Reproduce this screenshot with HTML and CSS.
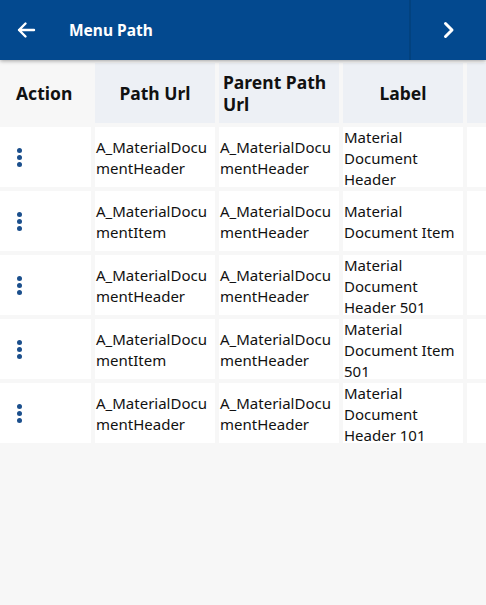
FILE: index.html
```html
<!DOCTYPE html>
<html lang="en">
<head>
<meta charset="utf-8">
<title>Menu Path</title>
<link rel="stylesheet" href="styles.css">
</head>
<body>
<header class="appbar">
  <button class="back" aria-label="Back">
    <svg width="20" height="20" viewBox="0 0 20 20"><path d="M18 10H3M9.5 3.5L3 10l6.5 6.5" fill="none" stroke="#fff" stroke-width="2.4" stroke-linecap="round" stroke-linejoin="round"/></svg>
  </button>
  <h1 class="title">Menu Path</h1>
  <div class="next">
    <svg width="14" height="18" viewBox="0 0 14 18"><path d="M3.5 2.5L10 9l-6.5 6.5" fill="none" stroke="#fff" stroke-width="3" stroke-linecap="round" stroke-linejoin="round"/></svg>
  </div>
</header>
<div class="scroller">
<main class="table">
  <div class="th action-h">Action</div>
  <div class="th">Path Url</div>
  <div class="th">Parent Path Url</div>
  <div class="th">Label</div>
  <div class="th"></div>

  <div class="td action"><span class="kebab"><i></i><i></i><i></i></span></div>
  <div class="td">A_MaterialDocumentHeader</div>
  <div class="td">A_MaterialDocumentHeader</div>
  <div class="td label">Material Document Header</div>
  <div class="td"></div>

  <div class="td action"><span class="kebab"><i></i><i></i><i></i></span></div>
  <div class="td">A_MaterialDocumentItem</div>
  <div class="td">A_MaterialDocumentHeader</div>
  <div class="td label">Material Document Item</div>
  <div class="td"></div>

  <div class="td action"><span class="kebab"><i></i><i></i><i></i></span></div>
  <div class="td">A_MaterialDocumentHeader</div>
  <div class="td">A_MaterialDocumentHeader</div>
  <div class="td label">Material Document Header 501</div>
  <div class="td"></div>

  <div class="td action"><span class="kebab"><i></i><i></i><i></i></span></div>
  <div class="td">A_MaterialDocumentItem</div>
  <div class="td">A_MaterialDocumentHeader</div>
  <div class="td label">Material Document Item 501</div>
  <div class="td"></div>

  <div class="td action"><span class="kebab"><i></i><i></i><i></i></span></div>
  <div class="td">A_MaterialDocumentHeader</div>
  <div class="td">A_MaterialDocumentHeader</div>
  <div class="td label">Material Document Header 101</div>
  <div class="td"></div>
</main>
</div>
</body>
</html>
```
FILE: styles.css
```css
html, body {
  margin: 0;
  padding: 0;
  background: #f7f7f7;
  font-family: "Noto Sans", "Open Sans", sans-serif;
  color: #111;
  overflow: hidden;
  height: 605px;
}

.appbar {
  height: 60px;
  background: #03498f;
  display: flex;
  align-items: center;
  box-shadow: 0 1px 4px rgba(0, 0, 0, 0.35);
  position: relative;
  z-index: 2;
}

.back {
  background: none;
  border: 0;
  padding: 0;
  margin-left: 15px;
  width: 22px;
  height: 22px;
  display: flex;
  align-items: center;
  justify-content: center;
}

.title {
  margin: 0 0 0 32px;
  font-size: 15.5px;
  font-weight: 700;
  color: #fff;
  flex: 1;
}

.next {
  width: 75px;
  height: 60px;
  display: flex;
  align-items: center;
  justify-content: center;
  border-left: 2px solid #02427f;
}

.scroller {
  width: 486px;
  overflow: hidden;
}

.table {
  display: grid;
  grid-template-columns: 91px 120px 120px 120px 120px;
  grid-auto-rows: 60px;
  gap: 4px;
  margin-top: 3px;
  width: 600px;
}

.th {
  background: #edf0f5;
  font-weight: 700;
  font-size: 17.5px;
  line-height: 22px;
  display: flex;
  align-items: center;
  justify-content: center;
  padding: 0 4px;
}

.th.action-h {
  background: #f7f7f7;
  justify-content: flex-start;
  padding-left: 16px;
}

.td {
  background: #fff;
  font-size: 15px;
  line-height: 21px;
  display: flex;
  align-items: center;
  padding: 2px 1px 0;
  word-break: break-all;
}

.td.label {
  word-break: normal;
}

.td.action {
  padding: 0 0 0 16px;
}

.kebab {
  display: flex;
  flex-direction: column;
  gap: 2px;
  padding-left: 1px;
}

.kebab i {
  display: block;
  width: 5px;
  height: 5px;
  border-radius: 50%;
  background: #1b4f8c;
}
```
